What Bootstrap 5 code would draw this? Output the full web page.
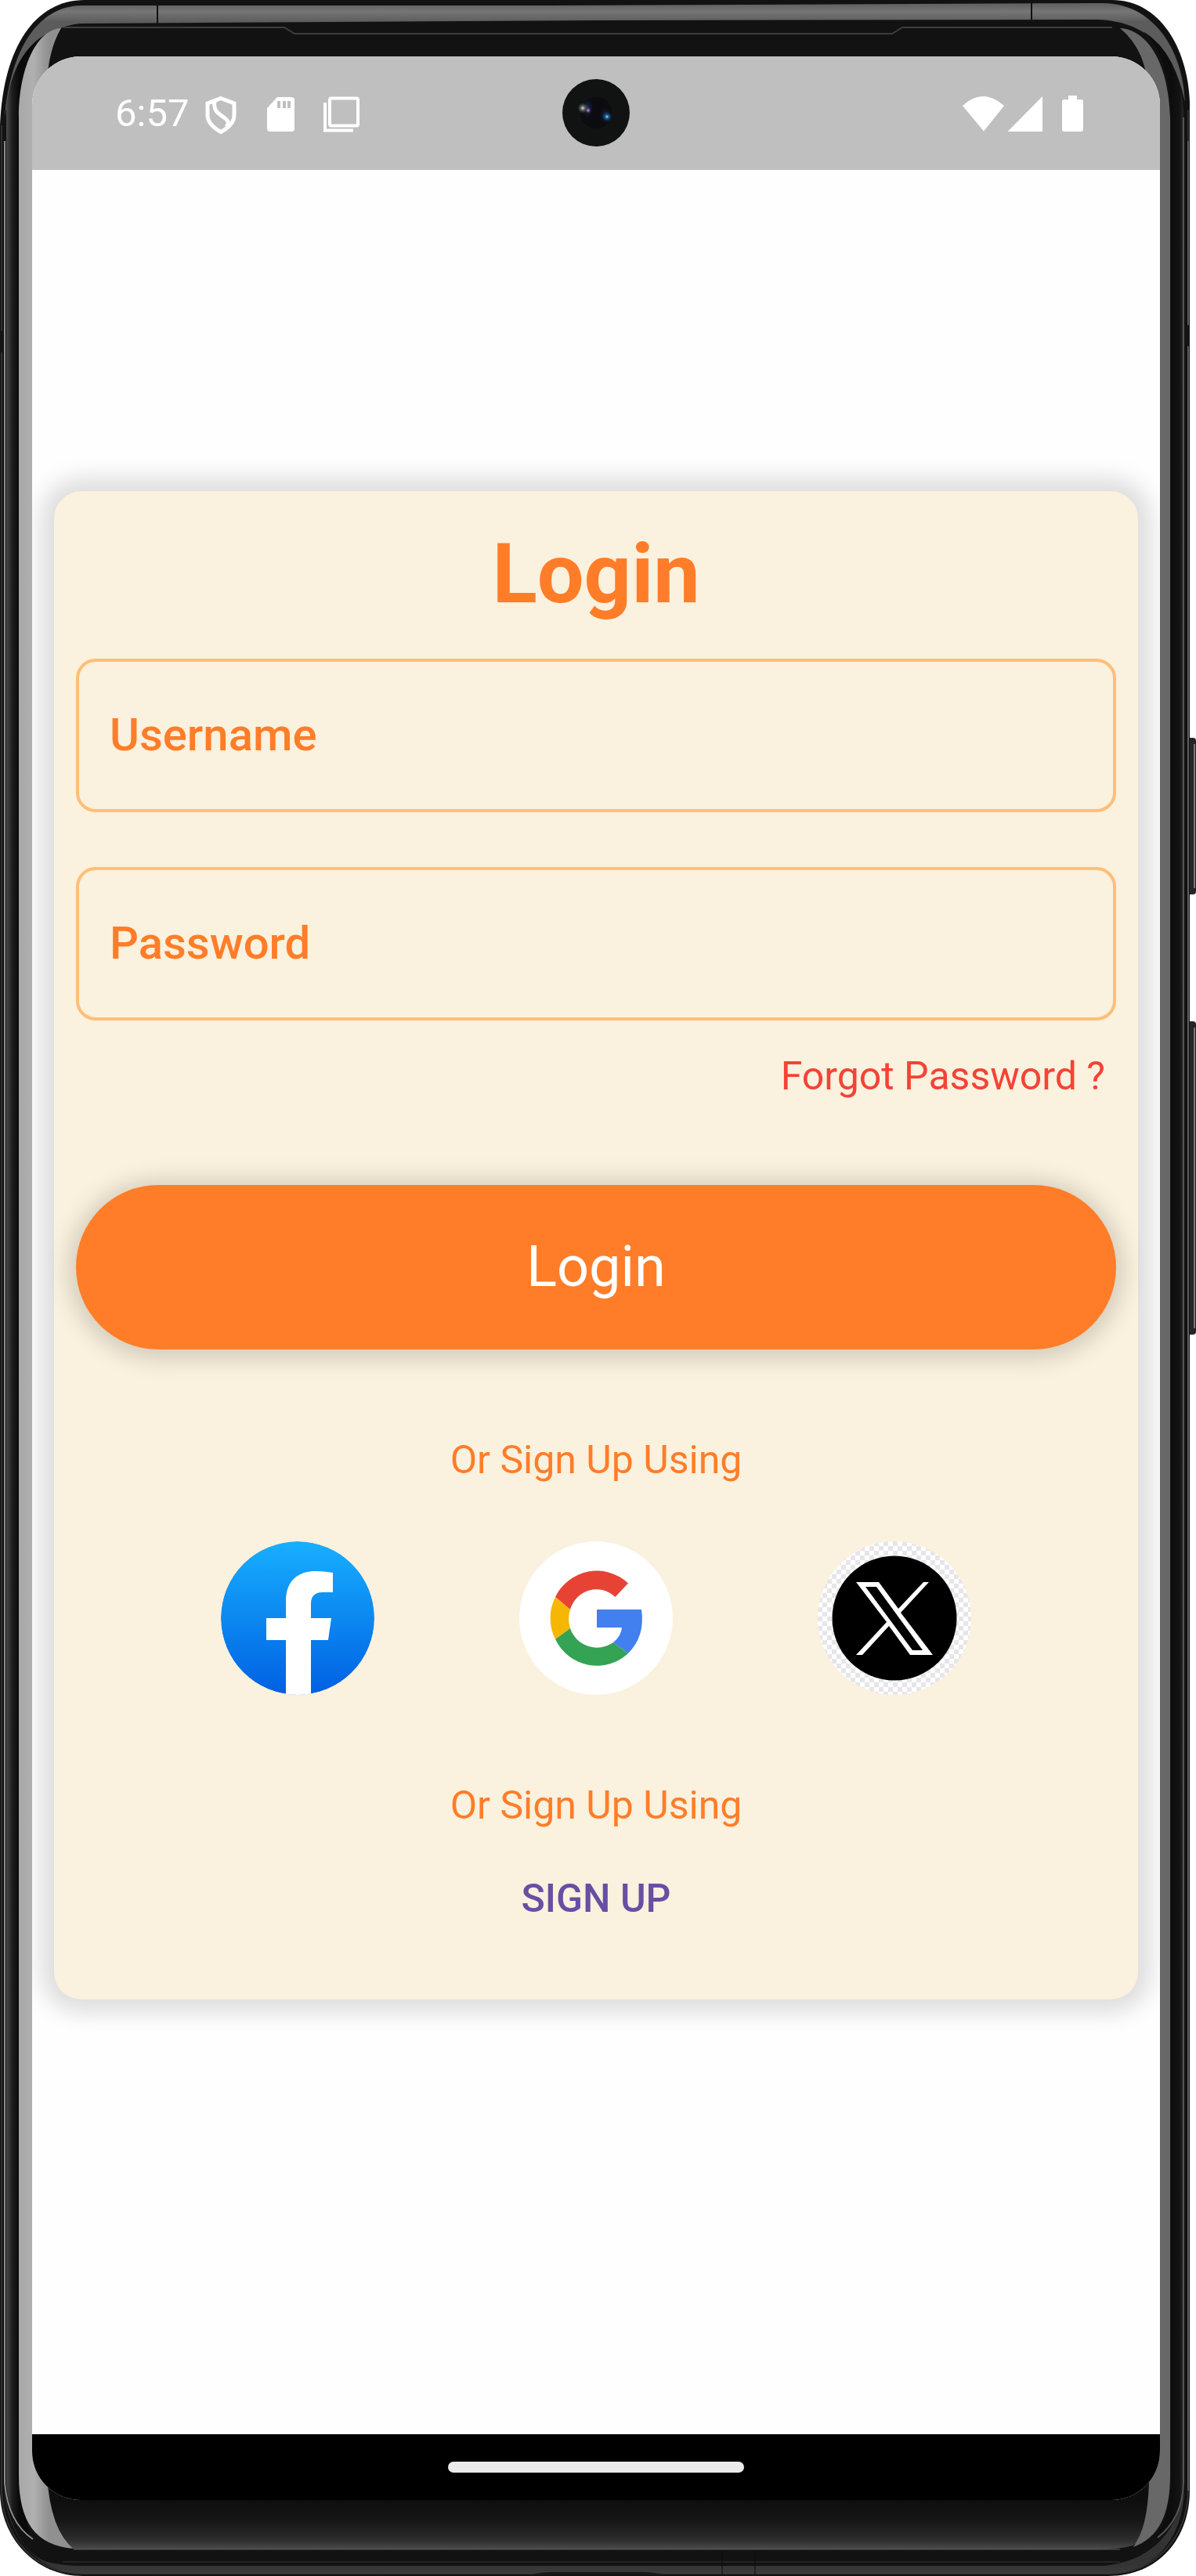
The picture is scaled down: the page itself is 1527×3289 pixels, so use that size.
<!DOCTYPE html>
<html lang="en">
<head>
<meta charset="utf-8">
<meta name="viewport" content="width=device-width, initial-scale=1">
<title>Login</title>
<link href="https://cdn.jsdelivr.net/npm/bootstrap@5.3.0/dist/css/bootstrap.min.css" rel="stylesheet">
<style>
:root{--brand:#ff7d29;--line:#ffbf78;--paper:#faf1de}
body{font-family:Roboto,"Liberation Sans",sans-serif;background:#fff}
.device{padding:72px 46px 97px 41px}
.device-shell{z-index:0}
.screen{z-index:1;border-radius:62px;background:#fefefe}
.status-bar{height:145px;background:#bfbfbf;padding:0 98px 0 106px;font-size:49px;line-height:56px;color:#fff}
.camera{left:50%;top:29px;width:86px;height:86px;transform:translateX(-50%)}
.nav-strip{height:84px;background:#000}
.nav-pill{width:378px;height:14px;border-radius:7px;background:#ebebeb}
.content-area{padding:0 28px 145px}
.login-panel{background:var(--paper);border-radius:35px;padding:28px;box-shadow:0 0 29px 17px rgba(0,0,0,.13)}
.login-title{font-size:106px;line-height:156px;font-weight:700;color:var(--brand)}
.field{height:196px;border:4px solid var(--line);border-radius:25px;background:transparent;padding:0 39px 2px;font-size:58px;font-weight:500;color:var(--brand)}
.field::placeholder{color:var(--brand);opacity:1}
.field:focus{background:transparent;border-color:var(--brand);box-shadow:none;color:var(--brand)}
.field-stack{gap:70px;margin-top:30px}
.small-line{font-size:50px;line-height:70px;color:var(--brand)}
.forgot{color:#f44336;padding:0 14px;margin-top:36px}
.login-btn{height:210px;font-size:72px;line-height:84px;margin-top:104px;background:var(--brand);color:#fff;box-shadow:0 3px 29px 10px rgba(0,0,0,.15);border:0}
.login-btn:hover{background:#f06f1c;color:#fff}
.or-first{margin-top:106px}
.socials{margin-top:69px}
.social{width:196px;height:196px}
.or-second{margin-top:106px}
.signup{color:#674fa3;font-weight:500;margin-top:49px;margin-bottom:66px}
</style>
</head>
<body>
<div class="device position-relative d-flex flex-column min-vh-100">
<svg class="device-shell position-absolute top-0 start-0 w-100 h-100" viewBox="0 0 1527 3289" preserveAspectRatio="none" aria-hidden="true">
<defs>
<linearGradient id="rim" gradientUnits="userSpaceOnUse" x1="0" x2="0" y1="6" y2="28"><stop offset="0" stop-color="#626262"/><stop offset=".4" stop-color="#767676"/><stop offset="1" stop-color="#5c5c5c"/></linearGradient>
<linearGradient id="chin" gradientUnits="userSpaceOnUse" x1="0" x2="0" y1="3192" y2="3255"><stop offset="0" stop-color="#0e0e0e"/><stop offset=".4" stop-color="#151515"/><stop offset=".8" stop-color="#2c2c2c"/><stop offset="1" stop-color="#4b4b4b"/></linearGradient>
<linearGradient id="lip" gradientUnits="userSpaceOnUse" x1="0" x2="0" y1="3274" y2="3287"><stop offset="0" stop-color="#333"/><stop offset="1" stop-color="#3c3c3c"/></linearGradient>
<linearGradient id="glassL" gradientUnits="userSpaceOnUse" x1="24" x2="62" y1="0" y2="0"><stop offset="0" stop-color="#a8a8a8"/><stop offset=".5" stop-color="#b0b0b0"/><stop offset="1" stop-color="#909090"/></linearGradient>
<linearGradient id="sideL" gradientUnits="userSpaceOnUse" x1="7" x2="24" y1="0" y2="0"><stop offset="0" stop-color="#505050"/><stop offset=".5" stop-color="#1e1e1e"/><stop offset="1" stop-color="#0a0a0a"/></linearGradient>
<linearGradient id="sideR" gradientUnits="userSpaceOnUse" x1="1495" x2="1511" y1="0" y2="0"><stop offset="0" stop-color="#0d0d0d"/><stop offset=".7" stop-color="#131313"/><stop offset="1" stop-color="#2a2a2a"/></linearGradient>
</defs>
<rect x="1514" y="942" width="13" height="200" rx="4" fill="#252525"/><path d="M1525 950v184" stroke="#777" stroke-width="2"/>
<rect x="1514" y="1304" width="13" height="400" rx="4" fill="#252525"/><path d="M1525 1312v384" stroke="#777" stroke-width="2"/>
<path d="M0 160C4 60 45 0 108 0H1420C1480 0 1516 60 1519 130V3180C1519 3240 1480 3289 1415 3289H105C45 3289 0 3240 0 3180Z" fill="#121212"/>
<path d="M6 150C14 60 50 7 105 7H700L1408 4C1470 4 1510 60 1513 130C1500 70 1470 27 1400 25L763 26L105 30C60 32 20 70 6 150Z" fill="url(#rim)"/>
<path d="M201 7v23M1317 4v21" stroke="#111" stroke-width="2"/>
<path d="M2 160V3180C4 3240 45 3286 105 3286H1415C1475 3286 1516 3240 1517 3180V140" fill="none" stroke="#303030" stroke-width="2"/>
<path d="M60 3271Q80 3276 105 3276H1410C1465 3270 1500 3240 1512 3180C1510 3245 1470 3286 1415 3286H105C50 3286 10 3240 5 3180C12 3225 30 3260 60 3271Z" fill="url(#lip)"/>
<path d="M80 3271H1430" stroke="#343434" stroke-width="1"/>
<path d="M675 3288Q690 3284 705 3284H820Q835 3284 850 3288Z" fill="#171717"/>
<path d="M922 3257V3287M964 3257V3287" stroke="#0b0b0b" stroke-width="1"/>
<path d="M8 140V3170Q12 3225 40 3243L24 3180V130C28 90 45 55 80 36C35 45 12 90 8 140Z" fill="url(#sideL)"/>
<path d="M6 180V3170Q10 3220 42 3242" fill="none" stroke="#8d8d8d" stroke-width="2"/>
<path d="M24 150C24 90 45 38 78 36Q61 65 60 110V3160Q64 3230 94 3254C45 3250 24 3220 24 3160Z" fill="url(#glassL)"/>
<path d="M1494 150C1492 80 1465 38 1430 36Q1465 65 1466 120V3160Q1464 3225 1447 3252C1480 3240 1494 3210 1494 3160Z" fill="#686868"/>
<path d="M1495 150V3160Q1495 3215 1475 3240Q1508 3220 1511 3170V140Q1506 70 1460 40Q1495 75 1495 150Z" fill="url(#sideR)"/>
<path d="M1511 150V3170Q1510 3215 1478 3240" fill="none" stroke="#555" stroke-width="2"/>
<path d="M1517 180V3180" stroke="#8a8a8a" stroke-width="1"/>
<path d="M62 3170H1467Q1465 3230 1447 3250Q1430 3255 1400 3255H94Q66 3230 62 3170Z" fill="url(#chin)"/>
<path d="M94 3255H1430" stroke="#5a5a5a" stroke-width="1"/>
<path d="M80 35H363L376 43H1139L1152 35H1420" fill="none" stroke="#3d3d3d" stroke-width="2"/>
<path d="M0 422h4v28H0zM1512 415h7v27h-7z" fill="#151515"/>
</svg>

<main class="screen position-relative d-flex flex-column flex-grow-1 overflow-hidden">
<header class="status-bar position-relative d-flex align-items-center justify-content-between">
<div class="d-flex align-items-center">
<span>6:57</span>
<svg class="ms-3" width="206" height="56" viewBox="257 116 206 56" fill="none" stroke="#fff" aria-hidden="true">
<path d="M282 124.500L299 131V146C299 156 290 163 282 167.500C274 163 265 156 265 146V131Z" stroke-width="5"/>
<path d="M274 128C272 141 279 144 286 149C293 154 292 157 289 161" stroke-width="5"/>
<path d="M354 123H372Q376 123 376 127V163Q376 167 372 167H345Q341 167 341 163V137Z" fill="#fff" stroke="none"/>
<path d="M354 128h4v9h-4zM361 128h4v9h-4zM367 128h4v9h-4z" fill="#bfbfbf" stroke="none"/>
<rect x="421" y="124.500" width="36" height="35" rx="2" stroke-width="4"/><path d="M415 130v35.500h36" stroke-width="4"/>
</svg>
</div>
<svg width="154" height="56" viewBox="1229 116 154 56" fill="#fff" aria-hidden="true">
<path d="M1229 134Q1255 110 1282 134L1256 166.500Z"/><path d="M1331 122V167H1286.500Z"/><path d="M1364 121h11v5h5q3 0 3 3v35q0 3-3 3h-21q-3 0-3-3v-35q0-3 3-3h5z"/>
</svg>
<svg class="camera position-absolute" viewBox="0 0 86 86" aria-hidden="true">
<defs><radialGradient id="glow"><stop offset="0" stop-color="#dfe6df"/><stop offset=".4" stop-color="#7c857c" stop-opacity=".7"/><stop offset="1" stop-color="#3a4a48" stop-opacity="0"/></radialGradient><radialGradient id="violet"><stop offset="0" stop-color="#d9a6d8"/><stop offset="1" stop-color="#43306a" stop-opacity="0"/></radialGradient><radialGradient id="blue"><stop offset="0" stop-color="#b5e0ff"/><stop offset=".3" stop-color="#1b66a0"/><stop offset="1" stop-color="#0b2740" stop-opacity="0"/></radialGradient><radialGradient id="haze"><stop offset="0" stop-color="#26356b"/><stop offset="1" stop-color="#0b0d14" stop-opacity="0"/></radialGradient></defs>
<circle cx="43" cy="43" r="43" fill="#111312"/><circle cx="43" cy="43" r="20" fill="#0b0b10"/><ellipse cx="32" cy="37" rx="9" ry="14" fill="url(#haze)"/><ellipse cx="55" cy="46" rx="9" ry="13" fill="url(#haze)" opacity=".7"/><circle cx="26" cy="37" r="7" fill="url(#glow)"/><circle cx="33" cy="40" r="4" fill="url(#violet)"/><circle cx="57" cy="48" r="7" fill="url(#blue)"/>
</svg>
</header>

<div class="content-area d-flex flex-column justify-content-center flex-grow-1">
<form class="login-panel d-flex flex-column" onsubmit="return false">
<h1 class="login-title text-center mb-0">Login</h1>
<div class="field-stack d-flex flex-column">
<input class="form-control field" type="text" placeholder="Username" aria-label="Username">
<input class="form-control field" type="password" placeholder="Password" aria-label="Password">
</div>
<a href="#" class="small-line forgot align-self-end text-decoration-none">Forgot Password ?</a>
<button type="submit" class="btn login-btn rounded-pill w-100">Login</button>
<p class="small-line or-first text-center mb-0">Or Sign Up Using</p>
<div class="socials d-flex justify-content-evenly">
<a href="#" class="social" aria-label="Facebook"><svg class="d-block w-100 h-100" viewBox="0 0 196 196">
<defs><linearGradient id="fb" x1="0" x2="0" y1="0" y2="1"><stop offset="0" stop-color="#18afff"/><stop offset="1" stop-color="#0060e2"/></linearGradient><clipPath id="fbc"><circle cx="98" cy="98" r="98"/></clipPath></defs>
<g clip-path="url(#fbc)"><circle cx="98" cy="98" r="98" fill="url(#fb)"/><path d="M83 196V126H58V98H83V76C83 51 98 38 121 38Q132 38 143 40V65H130C118 65 115 72 115 80V98H141L137 126H115V196Z" fill="#fff"/></g></svg></a>
<a href="#" class="social" aria-label="Google"><svg class="d-block w-100 h-100" viewBox="0 0 196 196">
<circle cx="98" cy="98" r="98" fill="#fff"/>
<path d="M46 71A59 60 0 0 1 139 53.500L122.500 71A35 36 0 0 0 65 87Z" fill="#e64335"/>
<path d="M46 71A60 60 0 0 0 46 125L65 111A40 40 0 0 1 65 87Z" fill="#f6b704"/>
<path d="M46 125A59 60 0 0 0 139 143L120 129A36 36 0 0 1 65 111Z" fill="#35a354"/>
<path d="M99 87H156Q161 121 139 143L120 129Q130 121 131 110H99Z" fill="#427fef"/></svg></a>
<a href="#" class="social" aria-label="X"><svg class="d-block w-100 h-100" viewBox="0 0 196 196">
<defs><pattern id="chk" width="12" height="12" patternUnits="userSpaceOnUse"><path d="M0 0h12v12H0z" fill="#fff"/><path d="M0 0h6v6H0zM6 6h6v6H6z" fill="#e6e6ea"/></pattern></defs>
<circle cx="98" cy="98" r="98" fill="url(#chk)"/><circle cx="98" cy="98" r="79.500" fill="#000"/>
<path fill="#fff" fill-rule="evenodd" d="M49 52H78L103 86L135 52H142L106 91L147 145H118L91 108L57 145H49L88 103ZM61 58L121 139H134L75 58Z"/></svg></a>
</div>
<p class="small-line or-second text-center mb-0">Or Sign Up Using</p>
<a href="#" class="small-line signup align-self-center text-decoration-none">SIGN UP</a>
</form>
</div>
<footer class="nav-strip d-flex align-items-center justify-content-center"><div class="nav-pill"></div></footer>
</main>
</div>
<script src="https://cdn.jsdelivr.net/npm/bootstrap@5.3.0/dist/js/bootstrap.bundle.min.js"></script>
</body>
</html>
